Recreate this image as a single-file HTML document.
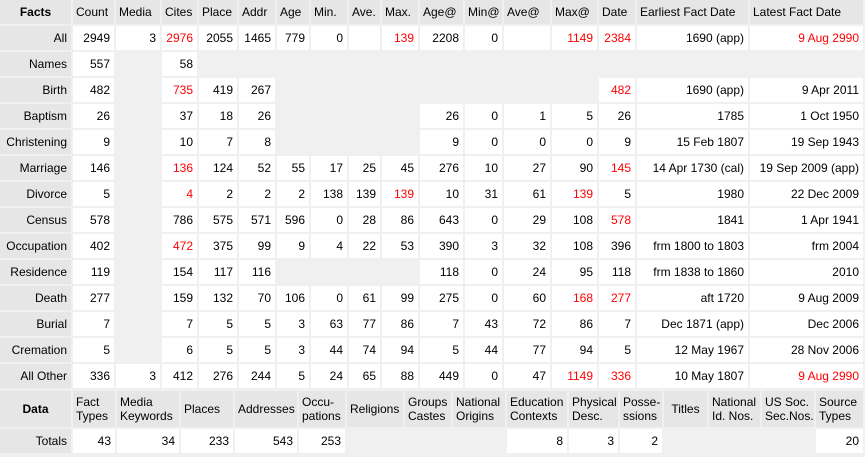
<!DOCTYPE html>
<html><head><meta charset="utf-8"><style>
body{margin:0;background:#f0f0f0;font-family:"Liberation Sans",Tahoma,sans-serif;font-size:12px;color:#000;width:865px;height:457px;overflow:hidden}
table{border-collapse:separate;border-spacing:0;table-layout:fixed;position:absolute;left:0}
td{border-right:2px solid #f0f0f0;border-bottom:2px solid #f0f0f0;background:#fff;text-align:right;padding:0 4px;white-space:nowrap;overflow:hidden;box-sizing:border-box}
#t1 td{height:26px}
td.h{background:#e6e6e6;text-align:left;padding:0 3px}
td.l{background:#e6e6e6;text-align:right}
td.e{background:#f0f0f0}
.r{color:#f00}
b{font-weight:bold}
#t2 td{line-height:14px}
</style></head><body>
<table id="t1" style="top:0;width:865px">
<colgroup><col style="width:73px"><col style="width:43px"><col style="width:46px"><col style="width:37px"><col style="width:40px"><col style="width:38px"><col style="width:34px"><col style="width:38px"><col style="width:33px"><col style="width:38px"><col style="width:45px"><col style="width:39px"><col style="width:48px"><col style="width:47px"><col style="width:38px"><col style="width:113px"><col style="width:115px"></colgroup>
<tr><td class="h" style="text-align:center"><b>Facts</b></td><td class="h">Count</td><td class="h">Media</td><td class="h">Cites</td><td class="h">Place</td><td class="h">Addr</td><td class="h">Age</td><td class="h">Min.</td><td class="h">Ave.</td><td class="h">Max.</td><td class="h">Age@</td><td class="h">Min@</td><td class="h">Ave@</td><td class="h">Max@</td><td class="h">Date</td><td class="h">Earliest Fact Date</td><td class="h">Latest Fact Date</td></tr>
<tr><td class="l">All</td><td>2949</td><td>3</td><td class="r">2976</td><td>2055</td><td>1465</td><td>779</td><td>0</td><td></td><td class="r">139</td><td>2208</td><td>0</td><td></td><td class="r">1149</td><td class="r">2384</td><td>1690 (app)</td><td class="r">9 Aug 2990</td></tr>
<tr><td class="l">Names</td><td>557</td><td class="e"></td><td>58</td><td class="e"></td><td class="e"></td><td class="e"></td><td class="e"></td><td class="e"></td><td class="e"></td><td class="e"></td><td class="e"></td><td class="e"></td><td class="e"></td><td class="e"></td><td class="e"></td><td class="e"></td></tr>
<tr><td class="l">Birth</td><td>482</td><td class="e"></td><td class="r">735</td><td>419</td><td>267</td><td class="e"></td><td class="e"></td><td class="e"></td><td class="e"></td><td class="e"></td><td class="e"></td><td class="e"></td><td class="e"></td><td class="r">482</td><td>1690 (app)</td><td>9 Apr 2011</td></tr>
<tr><td class="l">Baptism</td><td>26</td><td class="e"></td><td>37</td><td>18</td><td>26</td><td class="e"></td><td class="e"></td><td class="e"></td><td class="e"></td><td>26</td><td>0</td><td>1</td><td>5</td><td>26</td><td>1785</td><td>1 Oct 1950</td></tr>
<tr><td class="l">Christening</td><td>9</td><td class="e"></td><td>10</td><td>7</td><td>8</td><td class="e"></td><td class="e"></td><td class="e"></td><td class="e"></td><td>9</td><td>0</td><td>0</td><td>0</td><td>9</td><td>15 Feb 1807</td><td>19 Sep 1943</td></tr>
<tr><td class="l">Marriage</td><td>146</td><td class="e"></td><td class="r">136</td><td>124</td><td>52</td><td>55</td><td>17</td><td>25</td><td>45</td><td>276</td><td>10</td><td>27</td><td>90</td><td class="r">145</td><td>14 Apr 1730 (cal)</td><td>19 Sep 2009 (app)</td></tr>
<tr><td class="l">Divorce</td><td>5</td><td class="e"></td><td class="r">4</td><td>2</td><td>2</td><td>2</td><td>138</td><td>139</td><td class="r">139</td><td>10</td><td>31</td><td>61</td><td class="r">139</td><td>5</td><td>1980</td><td>22 Dec 2009</td></tr>
<tr><td class="l">Census</td><td>578</td><td class="e"></td><td>786</td><td>575</td><td>571</td><td>596</td><td>0</td><td>28</td><td>86</td><td>643</td><td>0</td><td>29</td><td>108</td><td class="r">578</td><td>1841</td><td>1 Apr 1941</td></tr>
<tr><td class="l">Occupation</td><td>402</td><td class="e"></td><td class="r">472</td><td>375</td><td>99</td><td>9</td><td>4</td><td>22</td><td>53</td><td>390</td><td>3</td><td>32</td><td>108</td><td>396</td><td>frm 1800 to 1803</td><td>frm 2004</td></tr>
<tr><td class="l">Residence</td><td>119</td><td class="e"></td><td>154</td><td>117</td><td>116</td><td class="e"></td><td class="e"></td><td class="e"></td><td class="e"></td><td>118</td><td>0</td><td>24</td><td>95</td><td>118</td><td>frm 1838 to 1860</td><td>2010</td></tr>
<tr><td class="l">Death</td><td>277</td><td class="e"></td><td>159</td><td>132</td><td>70</td><td>106</td><td>0</td><td>61</td><td>99</td><td>275</td><td>0</td><td>60</td><td class="r">168</td><td class="r">277</td><td>aft 1720</td><td>9 Aug 2009</td></tr>
<tr><td class="l">Burial</td><td>7</td><td class="e"></td><td>7</td><td>5</td><td>5</td><td>3</td><td>63</td><td>77</td><td>86</td><td>7</td><td>43</td><td>72</td><td>86</td><td>7</td><td>Dec 1871 (app)</td><td>Dec 2006</td></tr>
<tr><td class="l">Cremation</td><td>5</td><td class="e"></td><td>6</td><td>5</td><td>5</td><td>3</td><td>44</td><td>74</td><td>94</td><td>5</td><td>44</td><td>77</td><td>94</td><td>5</td><td>12 May 1967</td><td>28 Nov 2006</td></tr>
<tr><td class="l">All Other</td><td>336</td><td>3</td><td>412</td><td>276</td><td>244</td><td>5</td><td>24</td><td>65</td><td>88</td><td>449</td><td>0</td><td>47</td><td class="r">1149</td><td class="r">336</td><td>10 May 1807</td><td class="r">9 Aug 2990</td></tr>
</table>
<table id="t2" style="top:391px;width:865px">
<colgroup><col style="width:73px"><col style="width:44px"><col style="width:64px"><col style="width:54px"><col style="width:64px"><col style="width:48px"><col style="width:58px"><col style="width:48px"><col style="width:54px"><col style="width:62px"><col style="width:51px"><col style="width:44px"><col style="width:45px"><col style="width:53px"><col style="width:54px"><col style="width:49px"></colgroup>
<tr style="height:38px"><td class="h" style="height:38px;text-align:center"><b>Data</b></td><td class="h">Fact<br>Types</td><td class="h">Media<br>Keywords</td><td class="h">Places</td><td class="h">Addresses</td><td class="h">Occu-<br>pations</td><td class="h">Religions</td><td class="h">Groups<br>Castes</td><td class="h">National<br>Origins</td><td class="h">Education<br>Contexts</td><td class="h">Physical<br>Desc.</td><td class="h">Posse-<br>ssions</td><td class="h" style="text-align:center">Titles</td><td class="h">National<br>Id. Nos.</td><td class="h">US Soc.<br>Sec.Nos.</td><td class="h">Source<br>Types</td></tr>
<tr style="height:26px"><td class="l" style="height:26px">Totals</td><td>43</td><td>34</td><td>233</td><td>543</td><td>253</td><td class="e"></td><td class="e"></td><td class="e"></td><td>8</td><td>3</td><td>2</td><td class="e"></td><td class="e"></td><td class="e"></td><td>20</td></tr>
</table>
</body></html>
